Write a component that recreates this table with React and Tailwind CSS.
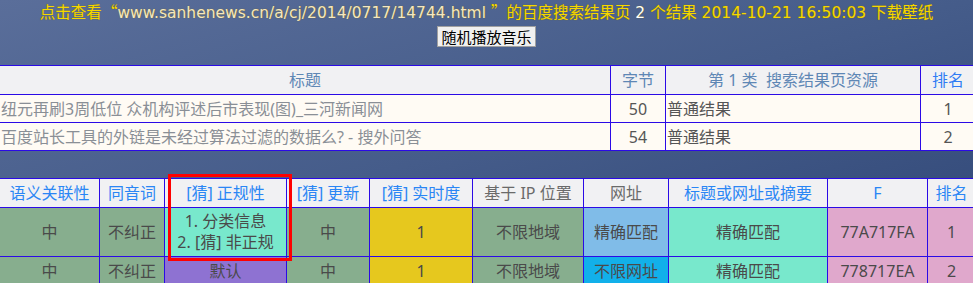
const cjk = { fontFamily: '"Noto Sans", "Noto Sans CJK SC", sans-serif' };

const results = [
  { title: "纽元再刷3周低位 众机构评述后市表现(图)_三河新闻网", bytes: 50, type: "普通结果", rank: 1 },
  { title: "百度站长工具的外链是未经过算法过滤的数据么? - 搜外问答", bytes: 54, type: "普通结果", rank: 2 },
];

const cols = [
  { label: "语义关联性", w: "w-[100px]", blue: true },
  { label: "同音词", w: "w-[65px]", blue: true },
  { label: "[猜] 正规性", w: "w-[122px]", blue: true },
  { label: "[猜] 更新", w: "w-[83px]", blue: true },
  { label: "[猜] 实时度", w: "w-[103px]", blue: true },
  { label: "基于 IP 位置", w: "w-[111px]", blue: false },
  { label: "网址", w: "w-[85px]", blue: false },
  { label: "标题或网址或摘要", w: "w-[159px]", blue: true },
  { label: "F", w: "w-[100px]", blue: true },
  { label: "排名", w: "w-[48px]", blue: true },
];

const line = "border border-[#2b0ae6]";

export default function App() {
  return (
    <div
      className="w-full h-[283px] overflow-hidden bg-gradient-to-br from-[#5a6e9a] via-[#455c8a] to-[#2f4676]"
      style={cjk}
    >
      {/* top line */}
      <div className="pt-[1px]">
        <p
          className="text-center whitespace-nowrap text-[15.5px] leading-[21px] text-[#f5d800] [text-shadow:0_0_1px_#7a6a00]"
          style={{ fontFamily: '"DejaVu Sans", "Noto Sans CJK SC", sans-serif' }}
        >
          点击查看<span style={{ fontFamily: '"Noto Sans CJK SC", sans-serif' }}>“</span>
          <span className="text-[#f4e6c4]">www.sanhenews.cn/a/cj/2014/0717/14744.html</span>{" "}
          <span style={{ fontFamily: '"Noto Sans CJK SC", sans-serif' }}>”</span>的百度搜索结果页{" "}
          <span className="text-white">2</span> 个结果 2014-10-21 16:50:03 下载壁纸
        </p>
        <button className="block mx-auto mt-[2px] h-[21px] px-[3px] bg-[#f0f0f0] border border-[#a0a0a0] text-[15px] leading-[18px] text-black">
          随机播放音乐
        </button>
      </div>

      {/* table 1 */}
      <table className="mt-[18px] -ml-px w-[976px] border-collapse table-fixed text-[16px]">
        <colgroup>
          <col className="w-[611px]" />
          <col className="w-[55px]" />
          <col className="w-[255px]" />
          <col className="w-[55px]" />
        </colgroup>
        <thead>
          <tr className="h-[29px] bg-[#f1f1f3] text-[#5e87b5]">
            <th className={`${line} font-normal`}>标题</th>
            <th className={`${line} font-normal`}>字节</th>
            <th className={`${line} font-normal`}>第 1 类&nbsp; 搜索结果页资源</th>
            <th className={`${line} font-normal text-[#2f7cf4]`}>排名</th>
          </tr>
        </thead>
        <tbody>
          {results.map((r) => (
            <tr key={r.rank} className="h-[28px] bg-[#fffbf4]">
              <td className={`${line} pl-px text-left text-[#8a8f96] whitespace-nowrap`}>{r.title}</td>
              <td className={`${line} text-center text-[#555]`}>{r.bytes}</td>
              <td className={`${line} pl-px text-left text-[#555]`}>{r.type}</td>
              <td className={`${line} text-center text-[#555]`}>{r.rank}</td>
            </tr>
          ))}
        </tbody>
      </table>

      {/* table 2 */}
      <div className="relative mt-[27px]">
        <table className="-ml-px w-[977px] border-collapse table-fixed text-[16px] text-[#4a4a4a]">
          <colgroup>
            {cols.map((c) => (
              <col key={c.label} className={c.w} />
            ))}
          </colgroup>
          <thead>
            <tr className="h-[29px] bg-[#f1f1f3]">
              {cols.map((c) => (
                <th
                  key={c.label}
                  className={`${line} font-normal whitespace-nowrap ${c.blue ? "text-[#2a86f5]" : "text-[#6a6a6a]"}`}
                >
                  {c.label}
                </th>
              ))}
            </tr>
          </thead>
          <tbody className="text-center">
            <tr className="h-[49px]">
              <td className={`${line} bg-[#87ae8e]`}>中</td>
              <td className={`${line} bg-[#87ae8e]`}>不纠正</td>
              <td className={`${line} bg-[#78e8cc] leading-[21px]`}>
                1. 分类信息
                <br />
                2. [猜] 非正规
              </td>
              <td className={`${line} bg-[#87ae8e]`}>中</td>
              <td className={`${line} bg-[#e6c81e]`}>1</td>
              <td className={`${line} bg-[#87ae8e]`}>不限地域</td>
              <td className={`${line} bg-[#80bce8]`}>精确匹配</td>
              <td className={`${line} bg-[#78e8cc]`}>精确匹配</td>
              <td className={`${line} bg-[#e0a8cc]`}>77A717FA</td>
              <td className={`${line} bg-[#e0a8cc]`}>1</td>
            </tr>
            <tr className="h-[29px]">
              <td className={`${line} bg-[#87ae8e]`}>中</td>
              <td className={`${line} bg-[#87ae8e]`}>不纠正</td>
              <td className={`${line} bg-[#8e72d2]`}>默认</td>
              <td className={`${line} bg-[#87ae8e]`}>中</td>
              <td className={`${line} bg-[#e6c81e]`}>1</td>
              <td className={`${line} bg-[#87ae8e]`}>不限地域</td>
              <td className={`${line} bg-[#12b0ea]`}>不限网址</td>
              <td className={`${line} bg-[#78e8cc]`}>精确匹配</td>
              <td className={`${line} bg-[#e0a8cc]`}>778717EA</td>
              <td className={`${line} bg-[#e0a8cc]`}>2</td>
            </tr>
          </tbody>
        </table>
        {/* highlight */}
        <div className="absolute left-[168px] top-[-4px] w-[124px] h-[87px] border-[3px] border-[#ff0000] pointer-events-none" />
      </div>
    </div>
  );
}
